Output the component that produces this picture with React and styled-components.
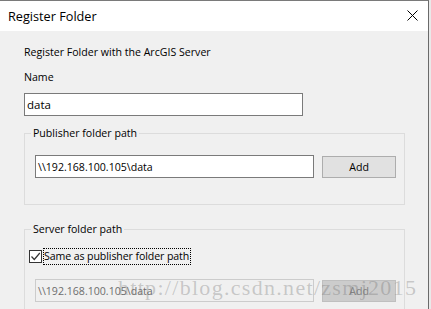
import React from "react";
import styled, { createGlobalStyle } from "styled-components";

const Global = createGlobalStyle`
  html, body { margin: 0; padding: 0; background: #e9e9e9; }
  body { font-family: "Open Sans", "Noto Sans", "Liberation Sans", sans-serif; }
`;

const Dialog = styled.div`
  position: relative;
  width: 428px;
  height: 308px;
  border-top: 1px solid #7a7a7a;
  border-right: 1px solid #6a6a6a;
  background: #f0f0f0;
  overflow: hidden;
  font-size: 10.6px;
  color: #000;
`;

const TitleBar = styled.div`
  height: 30px;
  background: #fff;
  display: flex;
  align-items: center;
  justify-content: space-between;
  padding: 0 10px 0 8px;
`;

const Title = styled.span`
  font-size: 12.7px;
  line-height: 16px;
`;

const CloseButton = styled.span`
  display: flex;
  width: 11px;
  height: 11px;
  margin-top: -1px;
`;

const Body = styled.div`
  padding: 13px 24px 0 24px;
`;

const Text = styled.div`
  line-height: 16px;
  margin-top: ${(p) => p.$mt || 0}px;
  padding-left: ${(p) => p.$pl || 0}px;
`;

const Input = styled.div`
  box-sizing: border-box;
  width: ${(p) => p.$w}px;
  height: 23px;
  margin-top: ${(p) => p.$mt || 0}px;
  border: 1px solid ${(p) => (p.$disabled ? "#cccccc" : "#7a7a7a")};
  background: ${(p) => (p.$disabled ? "#f0f0f0" : "#fff")};
  color: ${(p) => (p.$disabled ? "#6d6d6d" : "#000")};
  display: flex;
  align-items: center;
  padding-left: 2px;
  font-size: ${(p) => (p.$path ? "10.6px" : "11.5px")};
`;

const Group = styled.fieldset`
  margin: ${(p) => p.$mt}px 0 0 0;
  width: 381px;
  box-sizing: border-box;
  border: 1px solid #dcdcdc;
  padding: ${(p) => p.$pt}px ${(p) => p.$pr}px ${(p) => p.$pb}px ${(p) => p.$pl}px;
  min-width: 0;
`;

const Legend = styled.legend`
  padding: 0 2px;
  margin-left: ${(p) => p.$ml}px;
  font-size: 10.6px;
  line-height: 16px;
`;

const Row = styled.div`
  display: flex;
  align-items: center;
  gap: 8px;
  margin-top: ${(p) => p.$mt || 0}px;
  margin-left: ${(p) => p.$ml || 0}px;
`;

const Button = styled.div`
  box-sizing: border-box;
  width: 74px;
  height: 22px;
  background: ${(p) => (p.$disabled ? "#cccccc" : "#e1e1e1")};
  border: 1px solid ${(p) => (p.$disabled ? "#bfbfbf" : "#adadad")};
  color: ${(p) => (p.$disabled ? "#838383" : "#000")};
  display: flex;
  align-items: center;
  justify-content: center;
  font-size: 10.6px;
`;

const CheckRow = styled.div`
  display: flex;
  align-items: center;
  gap: 2px;
  height: 16px;
`;

const CheckBox = styled.span`
  box-sizing: border-box;
  width: 13px;
  height: 13px;
  border: 1px solid #333;
  background: #fff;
  display: flex;
  align-items: center;
  justify-content: center;
`;

const CheckLabel = styled.span`
  outline: 1px dotted #000;
  line-height: 15px;
  padding-right: 1px;
  letter-spacing: -0.1px;
`;

const Watermark = styled.div`
  position: absolute;
  left: 118px;
  top: 276px;
  font-family: "Liberation Serif", serif;
  font-size: 22px;
  line-height: 22px;
  letter-spacing: 1.3px;
  color: rgba(110, 110, 110, 0.33);
  white-space: nowrap;
  pointer-events: none;
`;

export default function App() {
  return (
    <>
      <Global />
      <Dialog>
        <TitleBar>
          <Title>Register Folder</Title>
          <CloseButton>
            <svg width="11" height="11" viewBox="0 0 11 11">
              <path d="M0.5 0.5 L10.5 10.5 M10.5 0.5 L0.5 10.5" stroke="#000" strokeWidth="1" fill="none" />
            </svg>
          </CloseButton>
        </TitleBar>
        <Body>
          <Text>Register Folder with the ArcGIS Server</Text>
          <Text $mt={9}>Name</Text>
          <Input $w={279} $mt={8}>data</Input>
          <Group $mt={9} $pt={14} $pr={8} $pb={26} $pl={10}>
            <Legend $ml={-4}>Publisher folder path</Legend>
            <Row>
              <Input $w={280} $path>\\192.168.100.105\data</Input>
              <Button>Add</Button>
            </Row>
          </Group>
          <Group $mt={16} $pt={11} $pr={8} $pb={20} $pl={4}>
            <Legend $ml={2}>Server folder path</Legend>
            <CheckRow>
              <CheckBox>
                <svg width="11" height="11" viewBox="0 0 11 11">
                  <path d="M1.5 5.5 L4.3 8.5 L9.8 2" stroke="#333" strokeWidth="1.2" fill="none" />
                </svg>
              </CheckBox>
              <CheckLabel>Same as publisher folder path</CheckLabel>
            </CheckRow>
            <Row $mt={15} $ml={6}>
              <Input $w={280} $path $disabled>\\192.168.100.105\data</Input>
              <Button $disabled>Add</Button>
            </Row>
          </Group>
        </Body>
        <Watermark>http://blog.csdn.net/zsmj2015</Watermark>
      </Dialog>
    </>
  );
}
